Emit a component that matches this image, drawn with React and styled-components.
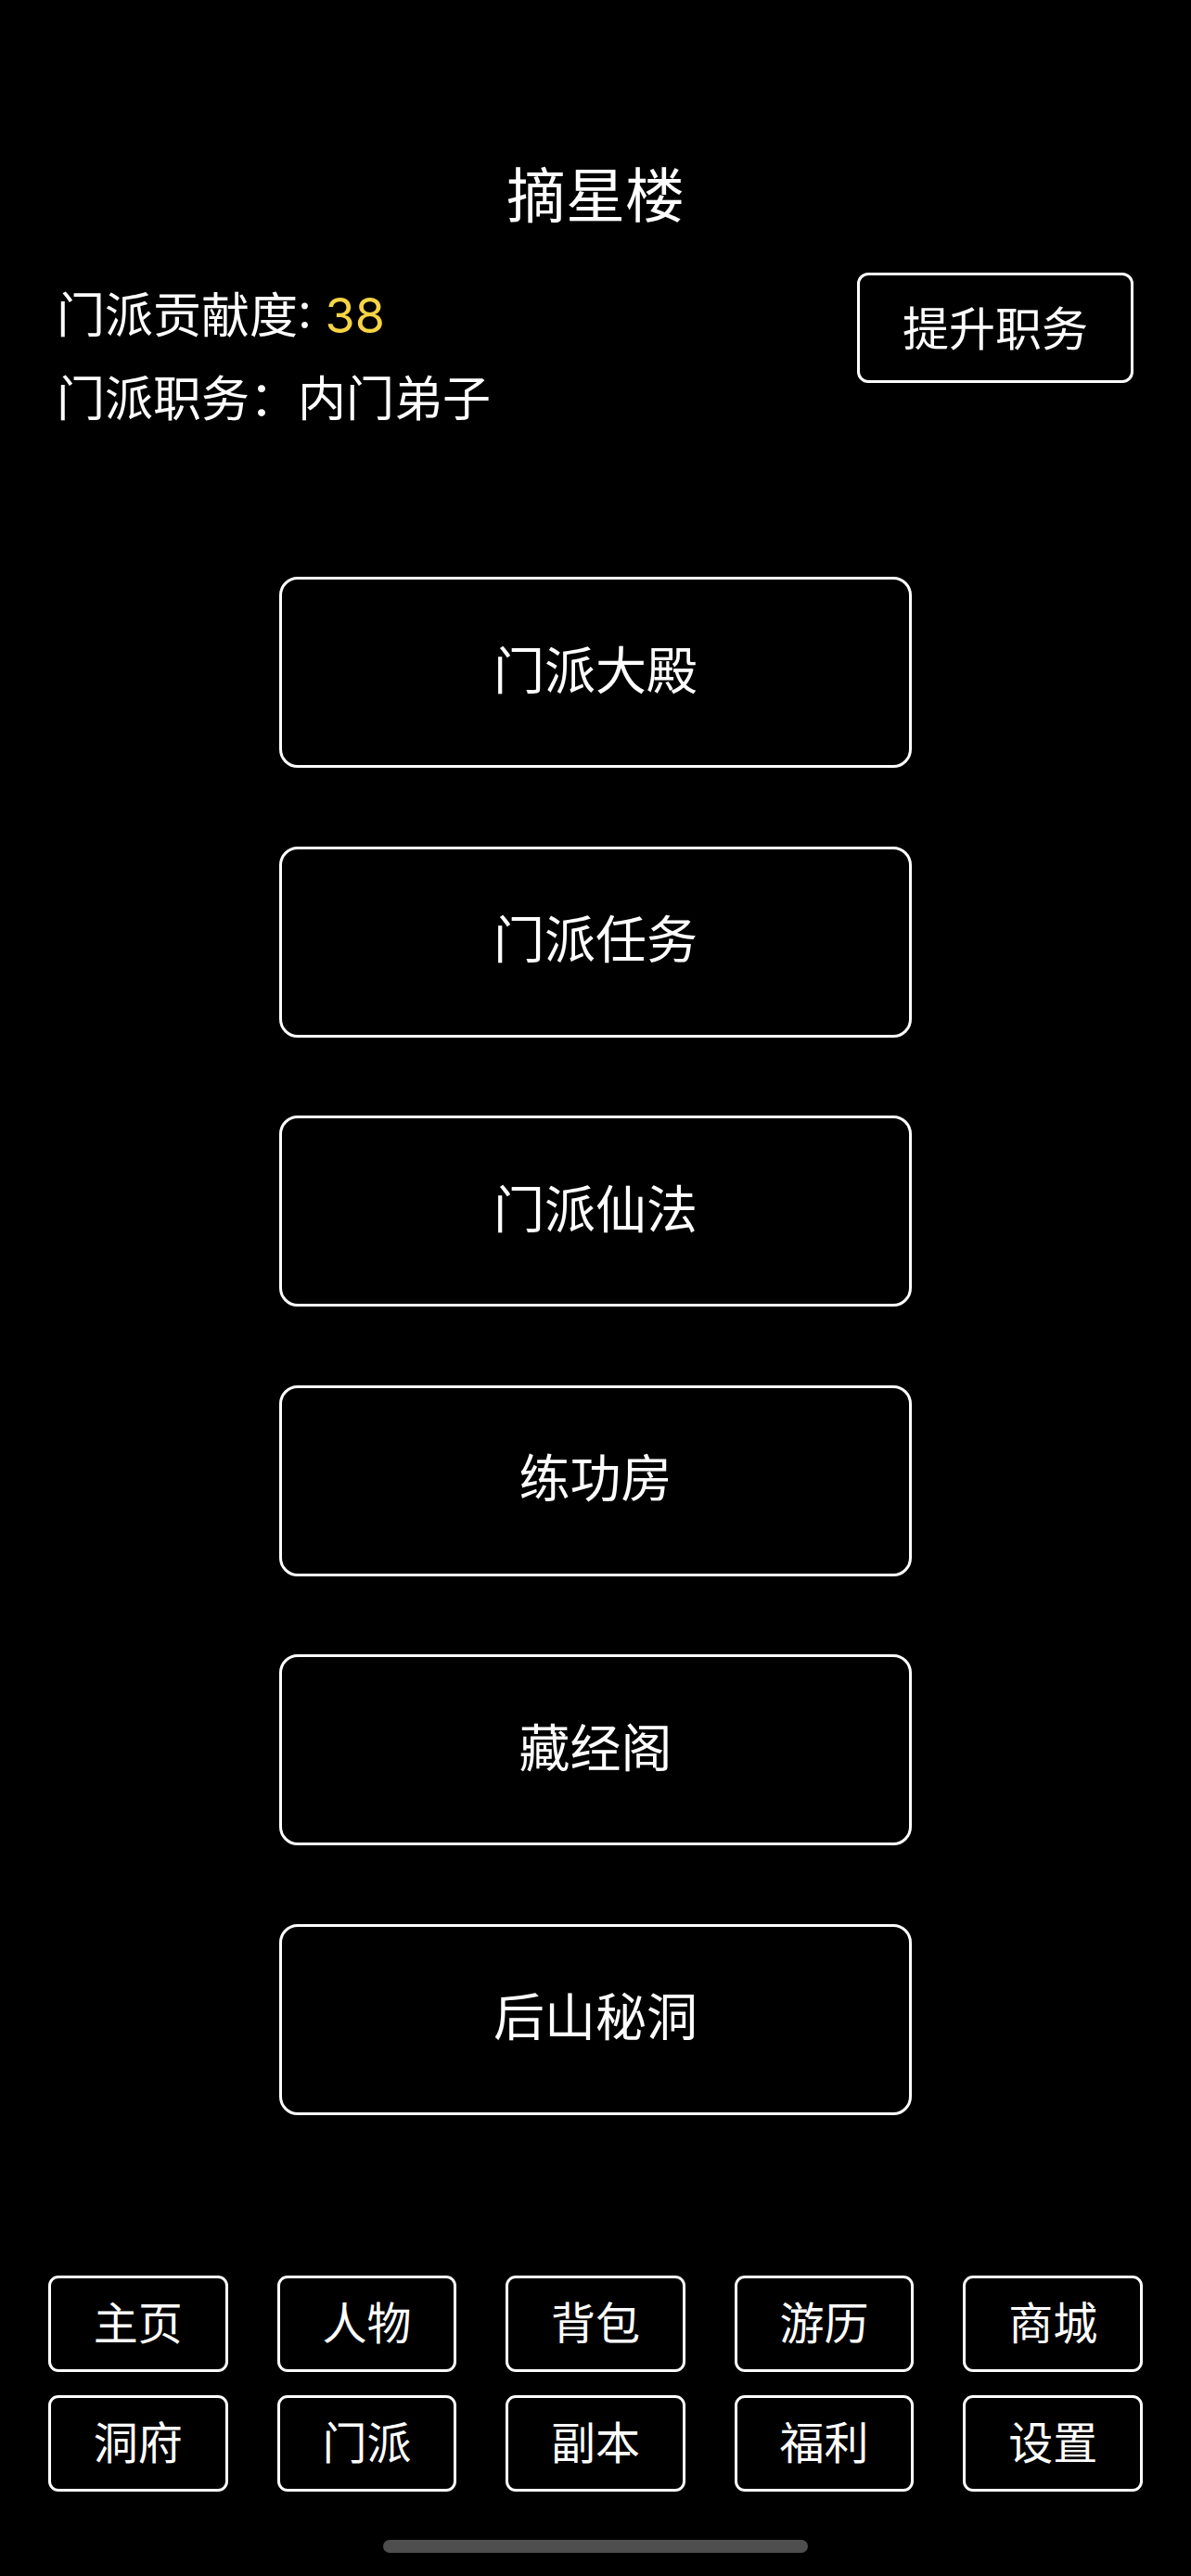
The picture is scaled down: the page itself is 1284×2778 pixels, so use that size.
import React from "react"
import styled, { createGlobalStyle } from "styled-components"

const GlobalStyle = createGlobalStyle`
html, body {
    margin: 0;
    padding: 0;
    background: #000;
}
body {
    color: #fff;
    font-family: Inter, "Noto Sans CJK SC", sans-serif;
    -webkit-font-smoothing: antialiased;
}
* {
    box-sizing: border-box;
}
`

const Screen = styled.div`
width: 1284px;
min-height: 2778px;
background: #000;
display: flex;
flex-direction: column;
padding-top: 179px;
`

const Title = styled.h1`
margin: 0;
font-size: 64px;
line-height: 64px;
font-weight: 400;
text-align: center;
`

const InfoBar = styled.section`
display: flex;
justify-content: space-between;
align-items: flex-start;
margin-top: 50px;
padding: 0 62px 0 61px;
`

const InfoList = styled.div`
display: flex;
flex-direction: column;
padding-top: 3px;
font-size: 52px;
line-height: 90px;
`

const InfoLine = styled.div`
white-space: pre;
`

const Points = styled.span`
color: #f6d445;
`

const SmallButton = styled.button`
width: 298px;
height: 119px;
margin-top: 1px;
background: transparent;
border: 3px solid #fff;
border-radius: 12px;
color: #fff;
font-family: inherit;
font-size: 50px;
padding: 0 0 5px;
display: flex;
align-items: center;
justify-content: center;
`

const Menu = styled.nav`
display: flex;
flex-direction: column;
align-items: center;
gap: 84.5px;
margin-top: 146px;
`

const MenuButton = styled.button`
width: 682px;
height: 206px;
background: transparent;
border: 3px solid #fff;
border-radius: 20px;
color: #fff;
font-family: inherit;
font-size: 55px;
padding: 0 0 13px;
display: flex;
align-items: center;
justify-content: center;
`

const TabGrid = styled.div`
display: grid;
grid-template-columns: repeat(5, 1fr);
column-gap: 53px;
row-gap: 25px;
padding: 0 52px;
margin-top: 173px;
`

const TabButton = styled.button`
height: 104px;
background: transparent;
border: 3px solid #fff;
border-radius: 11px;
color: #fff;
font-family: inherit;
font-size: 48px;
padding: 0 0 8px;
display: flex;
align-items: center;
justify-content: center;
`

const HomeBar = styled.div`
width: 458px;
height: 14px;
border-radius: 7px;
background: #4e4e4e;
margin: 52px auto 26px;
`

const menuItems = ["门派大殿", "门派任务", "门派仙法", "练功房", "藏经阁", "后山秘洞"]

const tabs = ["主页", "人物", "背包", "游历", "商城", "洞府", "门派", "副本", "福利", "设置"]

export default function App() {
    return <>
        <GlobalStyle />
        <Screen>
            <Title>摘星楼</Title>

            <InfoBar>
                <InfoList>
                    <InfoLine>门派贡献度: <Points>38</Points></InfoLine>
                    <InfoLine>门派职务：内门弟子</InfoLine>
                </InfoList>
                <SmallButton>提升职务</SmallButton>
            </InfoBar>

            <Menu>
                {menuItems.map(item => <MenuButton key={item}>{item}</MenuButton>)}
            </Menu>

            <TabGrid>
                {tabs.map(tab => <TabButton key={tab}>{tab}</TabButton>)}
            </TabGrid>

            <HomeBar />
        </Screen>
    </>
}
